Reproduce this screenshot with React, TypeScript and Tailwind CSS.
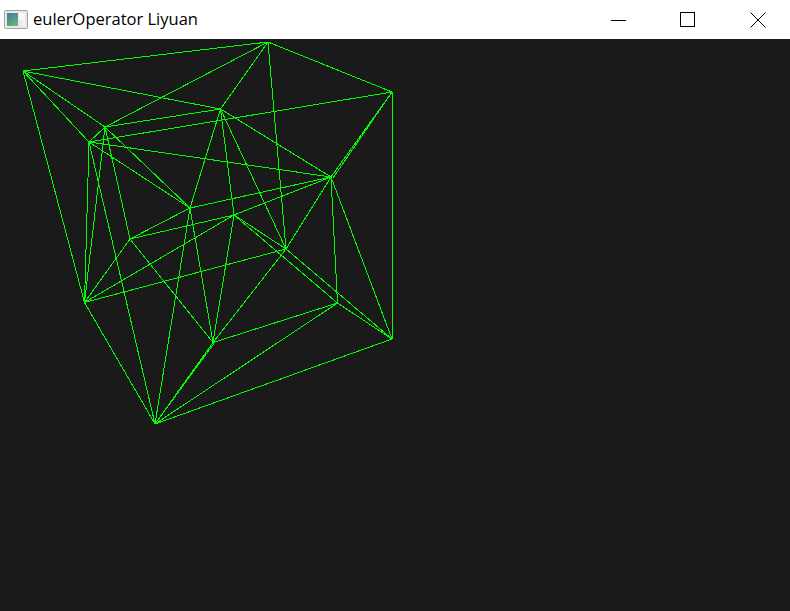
const vertices: Record<string, [number, number]> = {
  A: [23, 71],
  B: [268, 42],
  C: [392, 92],
  D: [105, 127],
  E: [89, 142],
  F: [220.5, 109],
  G: [331, 177],
  H: [190, 208],
  I: [234, 215],
  J: [130, 239],
  K: [286, 249],
  L: [84.5, 302.5],
  M: [337.5, 303],
  N: [213, 342.5],
  O: [392, 339],
  P: [155, 424],
};

const edges = [
  "AB", "AF", "AD", "AE", "AL",
  "BC", "BF", "BD", "BK",
  "CG", "CO", "CE",
  "DE", "DF", "DH", "DJ", "DL",
  "EG", "EH", "EL", "EP",
  "FG", "FH", "FI", "FK",
  "GH", "GI", "GK", "GM", "GO",
  "HJ", "HN", "HP",
  "IJ", "IK", "IL", "IM", "IN",
  "JL", "JN",
  "KL", "KN", "KO",
  "LP",
  "MN", "MO", "MP",
  "NP",
  "OP",
];

// edges the reference draws twice, a pixel or two apart
const doubled = [
  { x1: 392, y1: 92, x2: 333, y2: 178 },
  { x1: 215, y1: 342, x2: 155, y2: 424 },
];

function Mesh() {
  return (
    <svg width={790} height={572} viewBox="0 39 790 572" shapeRendering="crispEdges" className="block">
      {edges.map((e) => {
        const [x1, y1] = vertices[e[0]];
        const [x2, y2] = vertices[e[1]];
        return <line key={e} x1={x1} y1={y1} x2={x2} y2={y2} stroke="#00ff00" strokeWidth={1} />;
      })}
      {doubled.map((l, i) => (
        <line key={i} {...l} stroke="#00ff00" strokeWidth={1} />
      ))}
    </svg>
  );
}

function WindowIcon() {
  return (
    <svg width={24} height={20} viewBox="0 0 24 20" className="shrink-0">
      <defs>
        <linearGradient id="pane" x1="0" y1="0" x2="0.6" y2="1">
          <stop offset="0" stopColor="#3a7a9c" />
          <stop offset="1" stopColor="#68b07c" />
        </linearGradient>
      </defs>
      <rect x="0.5" y="0.5" width="23" height="18" rx="1" fill="#e8e8e8" stroke="#a3a3a3" />
      <rect x="3" y="3" width="11" height="13" fill="url(#pane)" />
      <rect x="15" y="3" width="5" height="7" fill="#fbfbfb" />
      <rect x="18" y="3" width="3" height="13" fill="#f6f6f6" />
    </svg>
  );
}

export default function App() {
  return (
    <div className="flex h-[611px] w-[790px] flex-col overflow-hidden bg-[#1a1a1a]">
      <div className="flex h-[39px] shrink-0 items-center bg-white pl-[4px]">
        <WindowIcon />
        <span className="ml-[5px] font-['Open_Sans',sans-serif] text-[16.5px] text-black">eulerOperator Liyuan</span>
        <div className="ml-auto flex h-full">
          <button className="flex w-[70px] items-center justify-center pl-[6px]">
            <svg width={16} height={16} viewBox="0 0 16 16" shapeRendering="crispEdges">
              <line x1={1} y1={8.5} x2={16} y2={8.5} stroke="#000" />
            </svg>
          </button>
          <button className="flex w-[70px] items-center justify-center pl-[6px]">
            <svg width={16} height={16} viewBox="0 0 16 16" shapeRendering="crispEdges">
              <rect x={0.5} y={0.5} width={14} height={14} fill="none" stroke="#000" />
            </svg>
          </button>
          <button className="flex w-[70px] items-center justify-center pl-[6px]">
            <svg width={16} height={16} viewBox="0 0 16 16">
              <path d="M0.5 0.5L15.5 15.5M15.5 0.5L0.5 15.5" fill="none" stroke="#000" />
            </svg>
          </button>
        </div>
      </div>
      <div className="flex-1">
        <Mesh />
      </div>
    </div>
  );
}
